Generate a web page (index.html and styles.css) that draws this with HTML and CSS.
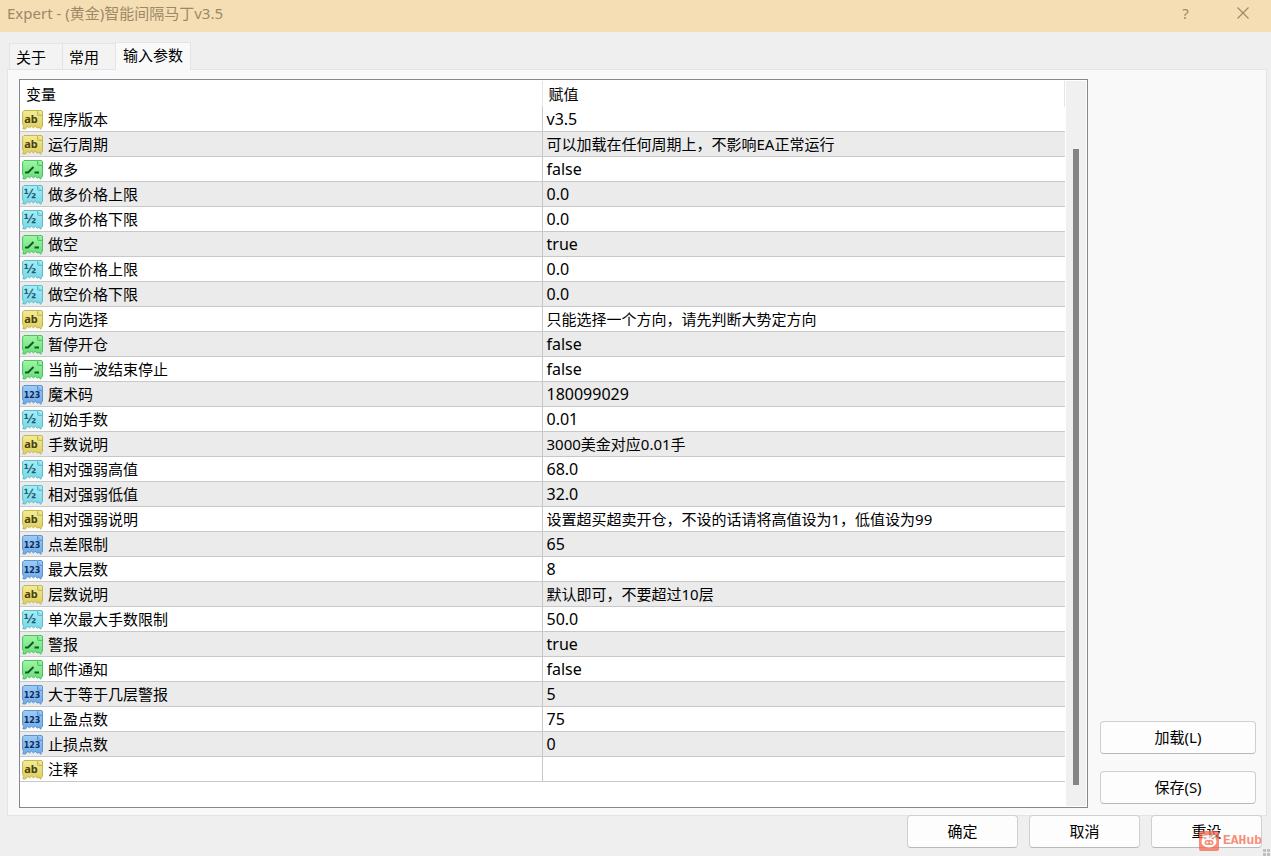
FILE: index.html
```html
<!DOCTYPE html>
<html lang="zh-CN">
<head>
  <meta charset="UTF-8">
  <meta name="viewport" content="width=device-width, initial-scale=1.0">
  <title>Expert</title>
  <link rel="stylesheet" href="styles.css">
</head>
<body>

  <!-- parameter type icons -->
  <svg class="defs" width="0" height="0">
    <defs>
      <linearGradient id="gYellow" x1="0" y1="0" x2="0" y2="1"><stop offset="0" stop-color="#f3ec94"/><stop offset="1" stop-color="#dccd60"/></linearGradient>
      <linearGradient id="gGreen" x1="0" y1="0" x2="0" y2="1"><stop offset="0" stop-color="#a0f5a4"/><stop offset="1" stop-color="#66de78"/></linearGradient>
      <linearGradient id="gCyan" x1="0" y1="0" x2="0" y2="1"><stop offset="0" stop-color="#a8edf6"/><stop offset="1" stop-color="#7ad6e5"/></linearGradient>
      <linearGradient id="gBlue" x1="0" y1="0" x2="0" y2="1"><stop offset="0" stop-color="#9fcbf6"/><stop offset="1" stop-color="#6eaae5"/></linearGradient>
      <path id="sheet" d="M2 .5H15.5H19Q20.5 .5 20.5 2V16L19.6 17.5L18.6 19.3L17 17L15.3 18.2L13.4 16.2L11.4 17.8L9.5 16.2L7.5 17.8L5.5 16.4L3.5 19L.8 18.8L1.6 16.5L.6 14V2Z"/>
      <path id="fold" d="M15.5 .8V4.5Q15.5 5.5 16.5 5.5H20.2"/>
    </defs>
    <symbol id="str" viewBox="0 0 21 20">
      <use href="#sheet" fill="url(#gYellow)" stroke="#c4b552"/>
      <use href="#fold" fill="#e3d878" stroke="#c4b552"/>
    </symbol>
    <symbol id="bool" viewBox="0 0 21 20">
      <use href="#sheet" fill="url(#gGreen)" stroke="#4cc065"/>
      <use href="#fold" fill="#7ce88a" stroke="#4cc065"/>
      <path d="M3 12.5H6L11.5 7M12.5 12.5H17" fill="none" stroke="#125a24" stroke-width="2"/>
    </symbol>
    <symbol id="dbl" viewBox="0 0 21 20">
      <use href="#sheet" fill="url(#gCyan)" stroke="#5bbccc"/>
      <use href="#fold" fill="#7ed5e4" stroke="#5bbccc"/>
    </symbol>
    <symbol id="int" viewBox="0 0 21 20">
      <use href="#sheet" fill="url(#gBlue)" stroke="#5b94d0"/>
      <use href="#fold" fill="#7db4ec" stroke="#5b94d0"/>
    </symbol>
  </svg>

  <header class="titlebar">
    <span class="title">Expert - (黄金)智能间隔马丁v3.5</span>
    <button class="win-btn" aria-label="帮助">?</button>
    <button class="win-btn" aria-label="关闭">
      <svg width="12" height="12" viewBox="0 0 12 12"><path d="M.5 .5L11.5 11.5M11.5 .5L.5 11.5" stroke="currentColor" stroke-width="1.2"/></svg>
    </button>
  </header>

  <div class="tabs" role="tablist">
    <button class="tab" role="tab">关于</button>
    <button class="tab" role="tab">常用</button>
    <button class="tab active" role="tab" aria-selected="true">输入参数</button>
  </div>

  <main class="panel">
    <div class="list">
      <table class="params">
        <thead>
          <tr><th>变量</th><th>赋值</th></tr>
        </thead>
        <tbody>
          <tr><td><svg class="icon str"><use href="#str"/><text x="9" y="13">ab</text></svg>程序版本</td><td class="latin">v3.5</td></tr>
          <tr><td><svg class="icon str"><use href="#str"/><text x="9" y="13">ab</text></svg>运行周期</td><td>可以加载在任何周期上，不影响EA正常运行</td></tr>
          <tr><td><svg class="icon"><use href="#bool"/></svg>做多</td><td class="latin">false</td></tr>
          <tr><td><svg class="icon dbl"><use href="#dbl"/><text x="8" y="13">½</text></svg>做多价格上限</td><td class="latin">0.0</td></tr>
          <tr><td><svg class="icon dbl"><use href="#dbl"/><text x="8" y="13">½</text></svg>做多价格下限</td><td class="latin">0.0</td></tr>
          <tr><td><svg class="icon"><use href="#bool"/></svg>做空</td><td class="latin">true</td></tr>
          <tr><td><svg class="icon dbl"><use href="#dbl"/><text x="8" y="13">½</text></svg>做空价格上限</td><td class="latin">0.0</td></tr>
          <tr><td><svg class="icon dbl"><use href="#dbl"/><text x="8" y="13">½</text></svg>做空价格下限</td><td class="latin">0.0</td></tr>
          <tr><td><svg class="icon str"><use href="#str"/><text x="9" y="13">ab</text></svg>方向选择</td><td>只能选择一个方向，请先判断大势定方向</td></tr>
          <tr><td><svg class="icon"><use href="#bool"/></svg>暂停开仓</td><td class="latin">false</td></tr>
          <tr><td><svg class="icon"><use href="#bool"/></svg>当前一波结束停止</td><td class="latin">false</td></tr>
          <tr><td><svg class="icon int"><use href="#int"/><text x="10" y="13">123</text></svg>魔术码</td><td class="latin">180099029</td></tr>
          <tr><td><svg class="icon dbl"><use href="#dbl"/><text x="8" y="13">½</text></svg>初始手数</td><td class="latin">0.01</td></tr>
          <tr><td><svg class="icon str"><use href="#str"/><text x="9" y="13">ab</text></svg>手数说明</td><td>3000美金对应0.01手</td></tr>
          <tr><td><svg class="icon dbl"><use href="#dbl"/><text x="8" y="13">½</text></svg>相对强弱高值</td><td class="latin">68.0</td></tr>
          <tr><td><svg class="icon dbl"><use href="#dbl"/><text x="8" y="13">½</text></svg>相对强弱低值</td><td class="latin">32.0</td></tr>
          <tr><td><svg class="icon str"><use href="#str"/><text x="9" y="13">ab</text></svg>相对强弱说明</td><td>设置超买超卖开仓，不设的话请将高值设为1，低值设为99</td></tr>
          <tr><td><svg class="icon int"><use href="#int"/><text x="10" y="13">123</text></svg>点差限制</td><td class="latin">65</td></tr>
          <tr><td><svg class="icon int"><use href="#int"/><text x="10" y="13">123</text></svg>最大层数</td><td class="latin">8</td></tr>
          <tr><td><svg class="icon str"><use href="#str"/><text x="9" y="13">ab</text></svg>层数说明</td><td>默认即可，不要超过10层</td></tr>
          <tr><td><svg class="icon dbl"><use href="#dbl"/><text x="8" y="13">½</text></svg>单次最大手数限制</td><td class="latin">50.0</td></tr>
          <tr><td><svg class="icon"><use href="#bool"/></svg>警报</td><td class="latin">true</td></tr>
          <tr><td><svg class="icon"><use href="#bool"/></svg>邮件通知</td><td class="latin">false</td></tr>
          <tr><td><svg class="icon int"><use href="#int"/><text x="10" y="13">123</text></svg>大于等于几层警报</td><td class="latin">5</td></tr>
          <tr><td><svg class="icon int"><use href="#int"/><text x="10" y="13">123</text></svg>止盈点数</td><td class="latin">75</td></tr>
          <tr><td><svg class="icon int"><use href="#int"/><text x="10" y="13">123</text></svg>止损点数</td><td class="latin">0</td></tr>
          <tr><td><svg class="icon str"><use href="#str"/><text x="9" y="13">ab</text></svg>注释</td><td></td></tr>
        </tbody>
      </table>
      <div class="scrollbar"><div class="thumb"></div></div>
    </div>

    <div class="side">
      <button class="btn">加载(L)</button>
      <button class="btn">保存(S)</button>
    </div>
  </main>

  <footer class="actions">
    <button class="btn">确定</button>
    <button class="btn">取消</button>
    <button class="btn">重设</button>
    <div class="watermark">
      <svg width="20" height="20" viewBox="0 0 20 20">
        <rect width="20" height="20" rx="2" fill="#f8674a"/>
        <path d="M3.5 7.5L3.2 3.2L7 4.6Q10 3.6 13 4.6L16.8 3.2L16.5 7.5Q18.5 11 16.2 14Q13.8 16.6 10 16.6T3.8 14Q1.5 11 3.5 7.5Z" fill="#fff"/>
        <path d="M5 8L7.5 7M15 8L12.5 7" stroke="#f8674a"/>
        <rect x="5.5" y="9" width="9" height="5" rx="2.5" fill="#f8674a"/>
        <circle cx="8.2" cy="11.5" r="1.1" fill="#fff"/>
        <circle cx="11.8" cy="11.5" r="1.1" fill="#fff"/>
      </svg>
      <span>EAHub</span>
    </div>
    <svg class="grip" width="8" height="8" viewBox="0 0 8 8"><path d="M0 0h3v3H0zM4 0h3v3H4zM0 4h3v3H0zM4 4h3v3H4z" fill="#bfbfbf"/></svg>
  </footer>

</body>
</html>
```

FILE: styles.css
```css
* {
  box-sizing: border-box;
}

body {
  margin: 0;
  background: #efefef;
  color: #000;
  font-family: "Noto Sans", "Noto Sans CJK SC", sans-serif;
  font-size: 15px;
  line-height: 20px;
}

button {
  margin: 0;
  font: inherit;
  color: inherit;
}

.defs {
  position: absolute;
}

/* title bar */
.titlebar {
  display: flex;
  align-items: center;
  height: 32px;
  padding: 0 7px;
  background: #f5deb3;
  color: #9c8968;
}

.title {
  flex: 1;
  padding-bottom: 6px;
}

.win-btn {
  display: flex;
  align-items: center;
  justify-content: center;
  width: 57px;
  height: 32px;
  padding: 0 0 6px;
  border: none;
  background: none;
}

.win-btn:last-child {
  margin-right: -7px;
}

/* tabs */
.tabs {
  display: flex;
  align-items: flex-end;
  padding: 10px 9px 0;
}

.tab {
  height: 26px;
  padding: 0 16px 0 6px;
  border: 1px solid #e4e4e4;
  border-right: none;
  border-bottom: none;
  background: #f3f3f3;
}

.tab.active {
  height: 28px;
  margin-bottom: -1px;
  padding: 0 7px 3px;
  border-right: 1px solid #e4e4e4;
  background: #f9f9f9;
  z-index: 1;
}

/* main panel */
.panel {
  display: flex;
  gap: 12px;
  margin: 0 4px 0 7px;
  padding: 9px 10px 7px 11px;
  border: 1px solid #e4e4e4;
  background: #f9f9f9;
}

.list {
  flex: 1;
  display: flex;
  gap: 1px;
  padding: 1px 1px 1px 0;
  border: 1px solid #828790;
  background: #fff;
}

.params {
  flex: 1;
  width: 100%;
  table-layout: fixed;
  border-collapse: separate;
  border-spacing: 0;
  margin-bottom: 24px;
}

.params th {
  height: 26px;
  padding: 0 6px;
  font-weight: normal;
  text-align: left;
  border-right: 1px solid #e5e5e5;
}

.params td {
  height: 25px;
  padding: 0 4px;
  border-bottom: 1px solid #c8c8c8;
}

.params td:first-child {
  padding-left: 2px;
  border-right: 1px solid #c8c8c8;
}

.params tbody tr:nth-child(even) {
  background: #ebebeb;
}

.params .latin {
  font-size: 16px;
}

.icon {
  width: 21px;
  height: 20px;
  margin-right: 5px;
  vertical-align: -5px;
}

.icon text {
  font-family: "DejaVu Sans", sans-serif;
  font-weight: bold;
  text-anchor: middle;
}

.str text {
  font-family: "Noto Sans", sans-serif;
  font-size: 11px;
  fill: #4a4212;
}

.dbl text {
  font-size: 12px;
  fill: #155d70;
}

.int text {
  font-size: 8px;
  fill: #102c5c;
}

.scrollbar {
  flex: none;
  width: 20px;
  padding: 68px 7px 21px;
  background: #f0f0f0;
}

.thumb {
  width: 6px;
  height: 100%;
  background: #858585;
}

.side {
  display: flex;
  flex-direction: column;
  justify-content: flex-end;
  gap: 17px;
  width: 156px;
  padding-bottom: 4px;
}

.btn {
  height: 33px;
  padding: 0 0 2px;
  border: 1px solid #d0d0d0;
  border-bottom-color: #b9b9b9;
  border-radius: 4px;
  background: #fdfdfd;
}

/* bottom buttons */
.actions {
  position: relative;
  display: flex;
  justify-content: flex-end;
  gap: 11px;
  margin-top: -1px;
  padding: 0 9px 8px;
}

.actions .btn {
  width: 111px;
}

.watermark {
  position: absolute;
  right: 9px;
  bottom: 5px;
  display: flex;
  align-items: center;
  gap: 4px;
  color: #f8674a;
  font-family: "Liberation Mono", monospace;
  font-size: 13px;
  font-weight: bold;
  opacity: 0.75;
}

.grip {
  position: absolute;
  right: 0;
  bottom: -1px;
}
```
